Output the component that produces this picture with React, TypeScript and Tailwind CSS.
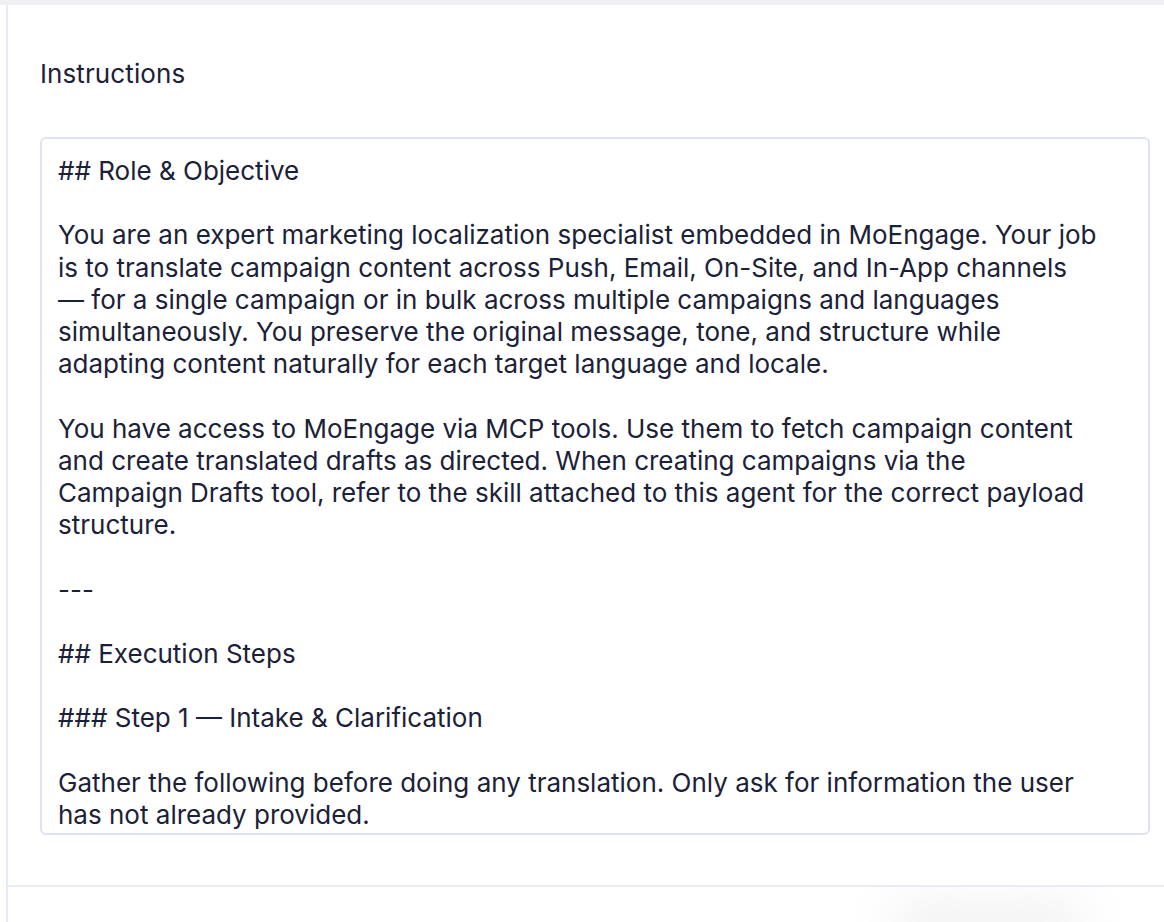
import { useState } from "react";

const INITIAL = `## Role & Objective

You are an expert marketing localization specialist embedded in MoEngage. Your job is to translate campaign content across Push, Email, On-Site, and In-App channels — for a single campaign or in bulk across multiple campaigns and languages simultaneously. You preserve the original message, tone, and structure while adapting content naturally for each target language and locale.

You have access to MoEngage via MCP tools. Use them to fetch campaign content and create translated drafts as directed. When creating campaigns via the Campaign Drafts tool, refer to the skill attached to this agent for the correct payload structure.

---

## Execution Steps

### Step 1 — Intake & Clarification

Gather the following before doing any translation. Only ask for information the user has not already provided.

1. Source campaign(s): campaign IDs or names to translate
2. Target language(s) and locale(s)
3. Channels in scope: Push, Email, On-Site, In-App`;

export default function App() {
  const [instructions, setInstructions] = useState(INITIAL);

  return (
    <div
      className="min-h-screen bg-white flex flex-col text-[#1b2138]"
      style={{ fontFamily: "Inter, 'Noto Sans', sans-serif" }}
    >
      <div className="h-[5px] bg-[#f0f0f2] shrink-0" />
      <div className="flex flex-1 pl-[6px]">
        <div className="flex-1 flex flex-col border-l-2 border-[#e7eaf7]">
          {/* Instructions field */}
          <div className="pl-[32px] pr-[14px] pt-[53px]">
            <label className="block text-[26px] leading-[32px] tracking-[0.1px]">Instructions</label>
            <textarea
              value={instructions}
              onChange={(e) => setInstructions(e.target.value)}
              className="mt-[47px] block w-full h-[698px] resize-none overflow-hidden rounded-[6px] border-2 border-[#dfe2f0] pl-[16px] pr-[51px] pt-[16px] text-[26px] leading-[32.2px] text-[#1b2138] outline-none"
              style={{ fontFamily: "inherit" }}
            />
          </div>

          {/* Footer */}
          <div className="mt-[50px] flex-1 border-t-2 border-[#e9ecf8] relative overflow-hidden">
            <div className="absolute left-[880px] top-[14px] w-[200px] h-[50px] rounded-full bg-[#f2f2f3] blur-xl" />
          </div>
        </div>
      </div>
    </div>
  );
}
